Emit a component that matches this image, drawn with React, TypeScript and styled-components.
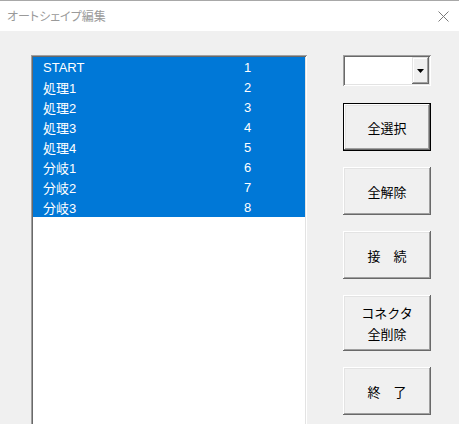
import React from 'react';
import styled, { createGlobalStyle } from 'styled-components';

const GlobalStyle = createGlobalStyle`
  html, body {
    margin: 0;
    padding: 0;
    background: #f0f0f0;
    overflow: hidden;
  }
  body {
    font-family: "Liberation Sans", "Noto Sans CJK JP", sans-serif;
  }
`;

const Window = styled.div`
  width: 459px;
  height: 424px;
  display: flex;
  flex-direction: column;
  background: #f0f0f0;
  overflow: hidden;
`;

const TitleBar = styled.div`
  flex-shrink: 0;
  height: 30px;
  border-top: 1px solid #a8a8a8;
  background: #fff;
  display: flex;
  align-items: center;
  justify-content: space-between;
  padding: 0 10px 0 7px;
`;

const Title = styled.span`
  font-family: "Noto Sans CJK JP", sans-serif;
  font-size: 12px;
  font-feature-settings: "palt";
  color: #9a9a9a;
  margin-top: -1px;
`;

const Body = styled.div`
  flex: 1;
  min-height: 0;
  display: flex;
  align-items: flex-start;
  padding: 24px 0 0 31px;
  gap: 36px;
`;

const ListBox = styled.div`
  flex-shrink: 0;
  width: 276px;
  height: 380px;
  box-sizing: border-box;
  padding: 2px;
  background: #fff;
  box-shadow: inset 1px 1px #a0a0a0, inset -1px -1px #fff, inset 2px 2px #696969,
    inset -2px -2px #e3e3e3;
`;

const Row = styled.div<{ $selected?: boolean }>`
  height: 20px;
  display: grid;
  grid-template-columns: 201px 1fr;
  align-items: center;
  padding-left: 10px;
  font-size: 13px;
  color: ${(p) => (p.$selected ? '#fff' : '#000')};
  background: ${(p) => (p.$selected ? '#0078d7' : 'transparent')};
`;

const Side = styled.div`
  flex-shrink: 0;
  width: 88px;
  display: flex;
  flex-direction: column;
  gap: 16px;
`;

const Combo = styled.div`
  height: 31px;
  box-sizing: border-box;
  padding: 2px;
  background: #fff;
  display: flex;
  justify-content: flex-end;
  margin-bottom: 1px;
  box-shadow: inset 1px 1px #a0a0a0, inset -1px -1px #fff, inset 2px 2px #696969,
    inset -2px -2px #e3e3e3;
`;

const ComboArrow = styled.div`
  width: 17px;
  background: #f0f0f0;
  display: flex;
  align-items: center;
  justify-content: center;
  box-shadow: inset -1px -1px #696969, inset 1px 1px #e3e3e3, inset -2px -2px #a0a0a0,
    inset 2px 2px #fff;
`;

const Button = styled.button<{ $default?: boolean; $tall?: boolean }>`
  flex-shrink: 0;
  height: ${(p) => (p.$tall ? '56px' : '48px')};
  width: 88px;
  box-sizing: border-box;
  padding: 0;
  background: #f0f0f0;
  border: ${(p) => (p.$default ? '1px solid #000' : 'none')};
  font-family: "Noto Sans CJK JP", sans-serif;
  font-size: 13px;
  line-height: 21px;
  color: #000;
  box-shadow: inset -1px -1px #696969, inset 1px 1px #fff, inset -2px -2px #a0a0a0,
    inset 2px 2px #e3e3e3;
`;

const items = ['START', '処理1', '処理2', '処理3', '処理4', '分岐1', '分岐2', '分岐3'];

export default function App() {
  return (
    <>
      <GlobalStyle />
      <Window>
        <TitleBar>
          <Title>オートシェイプ編集</Title>
          <svg width="11" height="11" viewBox="0 0 11 11">
            <path d="M0.5 0.5 L10.5 10.5 M10.5 0.5 L0.5 10.5" stroke="#7a7a7a" strokeWidth="1" />
          </svg>
        </TitleBar>
        <Body>
          <ListBox>
            {items.map((name, i) => (
              <Row key={name} $selected>
                <span>{name}</span>
                <span>{i + 1}</span>
              </Row>
            ))}
          </ListBox>
          <Side>
            <Combo>
              <ComboArrow>
                <svg width="7" height="4" viewBox="0 0 7 4">
                  <path d="M0 0 H7 L3.5 4 Z" fill="#000" />
                </svg>
              </ComboArrow>
            </Combo>
            <Button $default>全選択</Button>
            <Button>全解除</Button>
            <Button>接　続</Button>
            <Button $tall>
              コネクタ
              <br />
              全削除
            </Button>
            <Button>終　了</Button>
          </Side>
        </Body>
      </Window>
    </>
  );
}
